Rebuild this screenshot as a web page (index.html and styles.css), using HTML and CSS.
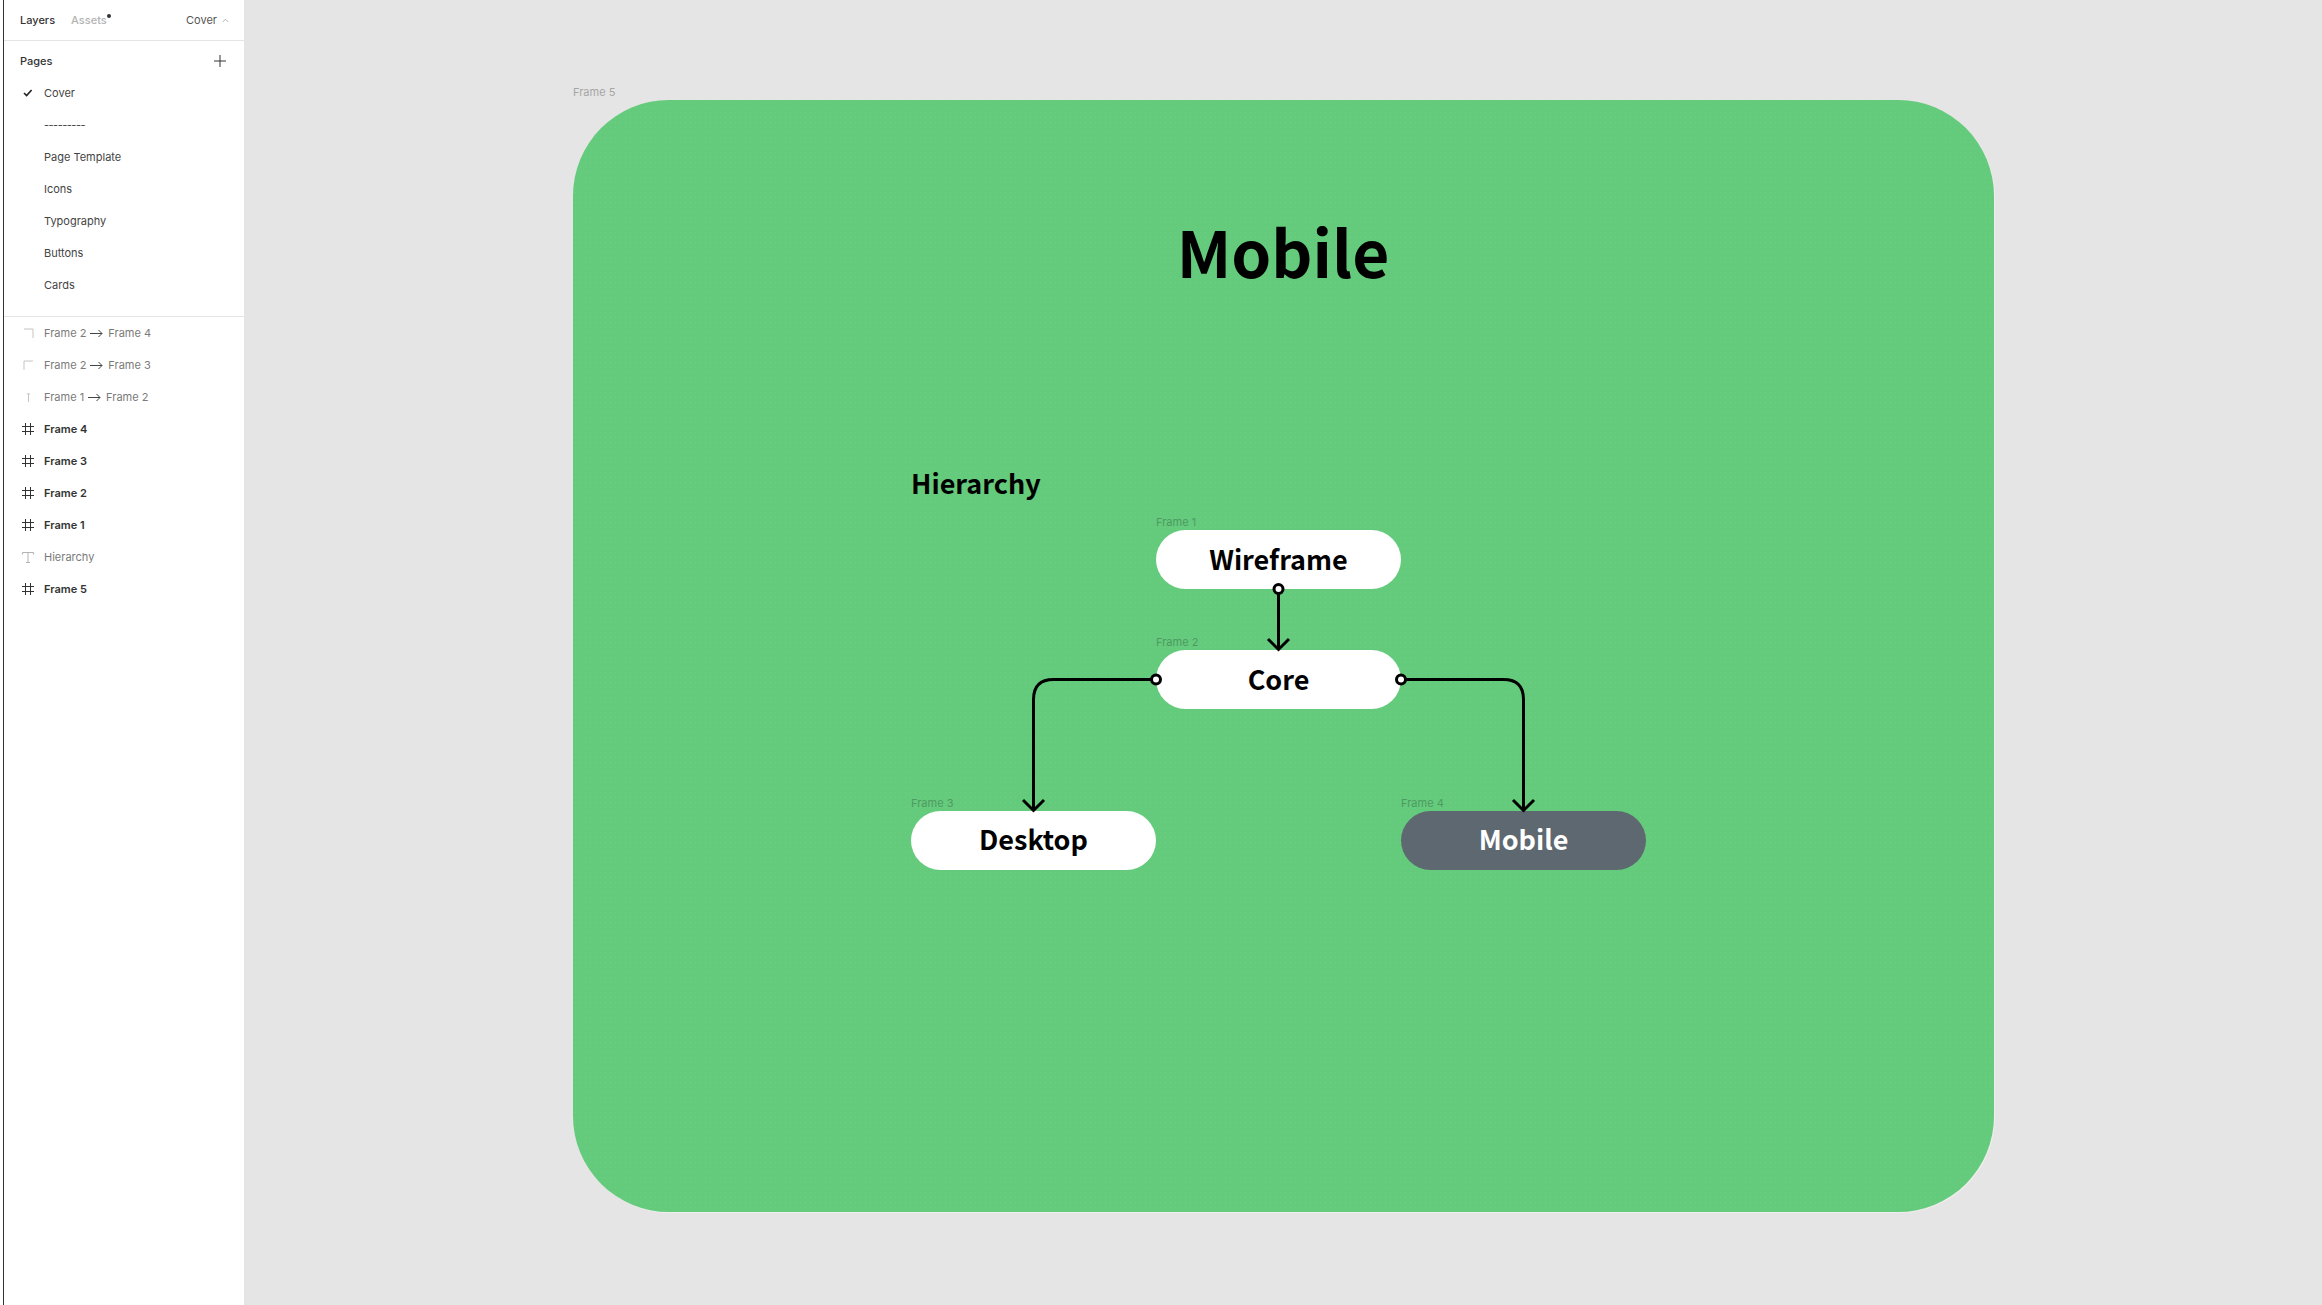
FILE: index.html
```html
<!DOCTYPE html>
<html>
<head>
  <title>Hierarchy - Mobile</title>
  <link rel="stylesheet" href="styles.css">
</head>
<body>

  <!-- LEFT PANEL -->
  <aside class="sidebar">
    <div class="tabs">
      <span class="tab">Layers</span>
      <span class="tab muted">Assets<i class="dot"></i></span>
      <span class="page-pick">Cover
        <svg width="7" height="5" viewBox="0 0 7 5"><path d="M.7 4 3.500 1.200 6.300 4" fill="none" stroke="#b3b3b3"/></svg>
      </span>
    </div>

    <div class="pages">
      <div class="pages-head">
        <span>Pages</span>
        <svg width="12" height="12" viewBox="0 0 12 12"><path d="M6 0v12M0 6h12" stroke="#333" stroke-width="1"/></svg>
      </div>
      <div class="row">
        <span class="ico"><svg width="10" height="8" viewBox="0 0 10 8"><path d="M1 4l2.600 2.600L8.600 1" fill="none" stroke="#222" stroke-width="1.600"/></svg></span>
        <span>Cover</span>
      </div>
      <div class="row"><span class="ico"></span><span class="dashes">---------</span></div>
      <div class="row"><span class="ico"></span><span>Page Template</span></div>
      <div class="row"><span class="ico"></span><span>Icons</span></div>
      <div class="row"><span class="ico"></span><span>Typography</span></div>
      <div class="row"><span class="ico"></span><span>Buttons</span></div>
      <div class="row"><span class="ico"></span><span>Cards</span></div>
    </div>

    <div class="layers">
      <div class="row light">
        <span class="ico"><svg width="11" height="11" viewBox="0 0 11 11"><path d="M1 1h9v9" fill="none" stroke="#c4c4c4"/></svg></span>
        <span class="link-name">Frame 2 <svg class="arrow" viewBox="0 0 13 9"><path d="M0 4.500h12M8.500 1l3.500 3.500L8.500 8"/></svg> Frame 4</span>
      </div>
      <div class="row light">
        <span class="ico"><svg width="11" height="11" viewBox="0 0 11 11"><path d="M1 10V1h9" fill="none" stroke="#c4c4c4"/></svg></span>
        <span class="link-name">Frame 2 <svg class="arrow" viewBox="0 0 13 9"><path d="M0 4.500h12M8.500 1l3.500 3.500L8.500 8"/></svg> Frame 3</span>
      </div>
      <div class="row light">
        <span class="ico"><svg width="5" height="11" viewBox="0 0 5 11"><path d="M2.500 1v9M1 2.500 2.500 1 4 2.500" fill="none" stroke="#c4c4c4"/></svg></span>
        <span class="link-name">Frame 1 <svg class="arrow" viewBox="0 0 13 9"><path d="M0 4.500h12M8.500 1l3.500 3.500L8.500 8"/></svg> Frame 2</span>
      </div>
      <div class="row strong">
        <span class="ico"><svg class="hash" viewBox="0 0 12 12"><path d="M3.500 0v12M8.500 0v12M0 3.500h12M0 8.500h12"/></svg></span>
        <span>Frame 4</span>
      </div>
      <div class="row strong">
        <span class="ico"><svg class="hash" viewBox="0 0 12 12"><path d="M3.500 0v12M8.500 0v12M0 3.500h12M0 8.500h12"/></svg></span>
        <span>Frame 3</span>
      </div>
      <div class="row strong">
        <span class="ico"><svg class="hash" viewBox="0 0 12 12"><path d="M3.500 0v12M8.500 0v12M0 3.500h12M0 8.500h12"/></svg></span>
        <span>Frame 2</span>
      </div>
      <div class="row strong">
        <span class="ico"><svg class="hash" viewBox="0 0 12 12"><path d="M3.500 0v12M8.500 0v12M0 3.500h12M0 8.500h12"/></svg></span>
        <span>Frame 1</span>
      </div>
      <div class="row light">
        <span class="ico"><svg width="12" height="11" viewBox="0 0 12 11"><path d="M.5 2.500V.5h11v2M6 .5v10M4 10.500h4" fill="none" stroke="#b3b3b3"/></svg></span>
        <span>Hierarchy</span>
      </div>
      <div class="row strong">
        <span class="ico"><svg class="hash" viewBox="0 0 12 12"><path d="M3.500 0v12M8.500 0v12M0 3.500h12M0 8.500h12"/></svg></span>
        <span>Frame 5</span>
      </div>
    </div>
  </aside>

  <!-- CANVAS -->
  <main class="canvas">
    <div class="frame-label frame5-label">Frame 5</div>
    <section class="frame5">
      <h1 class="title">Mobile</h1>
      <h2 class="subtitle">Hierarchy</h2>

      <svg class="wires" width="1421" height="1112" viewBox="0 0 1421 1112">
        <g fill="none" stroke="#000" stroke-width="3">
          <path d="M705.500 489V549M695 539 705.500 549.500 716 539"/>
          <path d="M583 579.500H480.500Q460.500 579.500 460.500 599.500V710M450 700 460.500 710.500 471 700"/>
          <path d="M828 579.500H930.500Q950.500 579.500 950.500 599.500V710M940 700 950.500 710.500 961 700"/>
        </g>
        <g fill="#fff" stroke="#000" stroke-width="3">
          <circle cx="705.500" cy="489" r="4.500"/>
          <circle cx="583" cy="579.500" r="4.500"/>
          <circle cx="828" cy="579.500" r="4.500"/>
        </g>
      </svg>

      <div class="frame-label on-green label-wireframe">Frame 1</div>
      <div class="pill pill-wireframe">Wireframe</div>
      <div class="frame-label on-green label-core">Frame 2</div>
      <div class="pill pill-core">Core</div>
      <div class="frame-label on-green label-desktop">Frame 3</div>
      <div class="pill pill-desktop">Desktop</div>
      <div class="frame-label on-green label-mobile">Frame 4</div>
      <div class="pill pill-mobile">Mobile</div>
    </section>
  </main>

</body>
</html>
```

FILE: styles.css
```css
* { box-sizing: border-box; }

html, body {
  margin: 0;
  height: 100%;
  overflow: hidden;
}
body {
  display: flex;
  background: #fff;
  font-family: Inter, "Liberation Sans", sans-serif;
  font-size: 11px;
  color: #333;
}

/* left panel */
.sidebar {
  width: 241px;
  margin-left: 3px;
  height: 1305px;
  flex: none;
  border-left: 1px solid #333;
  background: #fff;
}
.tabs {
  display: flex;
  align-items: center;
  height: 41px;
  padding: 0 15px 0 16px;
  border-bottom: 1px solid #e5e5e5;
}
.tab { margin-right: 16px; font-weight: 500; }
.tab.muted { color: #b3b3b3; position: relative; }
.dot {
  position: absolute;
  top: 1px;
  right: -4px;
  width: 4px;
  height: 4px;
  border-radius: 50%;
  background: #333;
}
.page-pick {
  margin-left: auto;
  display: flex;
  align-items: center;
  gap: 5px;
  color: #555;
}
.pages {
  padding: 4px 0 15px;
  border-bottom: 1px solid #e5e5e5;
}
.pages-head {
  display: flex;
  align-items: center;
  justify-content: space-between;
  height: 32px;
  padding: 0 18px 0 16px;
  font-weight: 500;
}
.row {
  display: flex;
  align-items: center;
  height: 32px;
  color: #444;
}
.ico {
  display: flex;
  align-items: center;
  justify-content: center;
  width: 40px;
  padding-left: 8px;
  flex: none;
}
.dashes { letter-spacing: -.5px; }
.row.light { color: #7a7a7a; }
.row.strong { color: #333; font-weight: 600; }
.link-name { display: flex; align-items: center; gap: 4px; }
.arrow { width: 13px; height: 9px; margin-right: 1px; }
.arrow path { fill: none; stroke: #444; stroke-width: 1; }
.hash { width: 12px; height: 12px; }
.hash path { fill: none; stroke: #333; stroke-width: 1; }

/* canvas */
.canvas {
  position: relative;
  flex: 1;
  height: 1305px;
  background: #e5e5e5;
}
.frame-label {
  position: absolute;
  font-size: 11px;
  line-height: 14px;
  color: #a6a6a6;
}
.frame5-label { left: 329px; top: 85px; }
.frame5 {
  position: absolute;
  left: 329px;
  top: 100px;
  width: 1421px;
  height: 1112px;
  border-radius: 96px;
  background-color: #64cb7c;
  background-image: radial-gradient(rgba(255, 255, 255, .07) .6px, transparent .9px);
  background-size: 5px 5px;
  box-shadow: 1px 1px 0 rgba(255, 255, 255, .35);
  font-family: "Noto Sans CJK SC", "Noto Sans", sans-serif;
}
.title {
  position: absolute;
  left: 0;
  right: 0;
  top: 105px;
  margin: 0;
  padding-right: 1px;
  text-align: center;
  font-size: 64px;
  line-height: 90px;
  font-weight: 700;
  color: #000;
}
.subtitle {
  position: absolute;
  left: 338px;
  top: 363px;
  margin: 0;
  font-size: 27px;
  line-height: 40px;
  font-weight: 700;
  color: #000;
}
.wires { position: absolute; left: 0; top: 0; z-index: 2; }
.pill {
  position: absolute;
  width: 245px;
  height: 59px;
  padding-bottom: 3px;
  display: flex;
  align-items: center;
  justify-content: center;
  border-radius: 30px;
  background: #fff;
  color: #000;
  font-size: 27px;
  font-weight: 700;
}
.pill-wireframe { left: 583px; top: 430px; }
.pill-core { left: 583px; top: 550px; }
.pill-desktop { left: 338px; top: 711px; padding-bottom: 5px; }
.pill-mobile { left: 828px; top: 711px; padding-bottom: 5px; background: #5e6870; color: #fff; }
.on-green {
  font-family: Inter, "Liberation Sans", sans-serif;
  color: #4f9a62;
}
.label-wireframe { left: 583px; top: 415px; }
.label-core { left: 583px; top: 535px; }
.label-desktop { left: 338px; top: 696px; }
.label-mobile { left: 828px; top: 696px; }
```
